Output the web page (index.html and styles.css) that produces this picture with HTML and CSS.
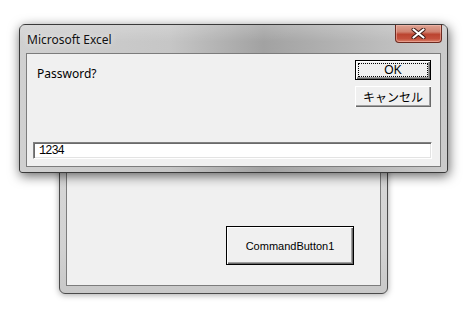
FILE: index.html
```html
<!DOCTYPE html>
<html lang="ja">
<head>
    <meta charset="UTF-8">
    <title>Microsoft Excel</title>
    <link rel="stylesheet" href="styles.css">
</head>
<body>
    <div class="desktop">
        <div class="window userform">
            <div class="client form-client">
                <button class="cmd default">CommandButton1</button>
            </div>
        </div>

        <div class="window dialog">
            <div class="titlebar">
                <span class="title">Microsoft Excel</span>
                <button class="close" aria-label="閉じる">
                    <svg width="15" height="11" viewBox="0 0 15 11">
                        <path d="M2.5 1.5 L12.5 9.5 M12.5 1.5 L2.5 9.5" stroke="#3b1712" stroke-width="4" stroke-linecap="round"/>
                        <path d="M2.5 1.5 L12.5 9.5 M12.5 1.5 L2.5 9.5" stroke="#ffffff" stroke-width="2.2" stroke-linecap="round"/>
                    </svg>
                </button>
            </div>
            <div class="client dialog-client">
                <div class="prompt-row">
                    <span class="prompt">Password?</span>
                    <div class="actions">
                        <button class="btn ok"><span class="focus">OK</span></button>
                        <button class="btn">キャンセル</button>
                    </div>
                </div>
                <input class="entry" type="text" value="1234">
            </div>
        </div>
    </div>
</body>
</html>
```

FILE: styles.css
```css
body {
    margin: 0;
    background: #ffffff;
    font-family: 'Noto Sans', 'Noto Sans CJK JP', sans-serif;
}
.desktop {
    position: relative;
    width: 475px;
    height: 313px;
    overflow: hidden;
}
.window {
    position: absolute;
    box-sizing: border-box;
    border: 1px solid #4a4a4a;
}
.client {
    box-sizing: border-box;
    background: #f0f0f0;
    border: 1px solid #7c7c7c;
}

/* back window (the user form) */
.userform {
    left: 59px;
    top: 140px;
    width: 329px;
    height: 154px;
    padding: 0 6px 7px 6px;
    border-radius: 0 0 6px 6px;
    background: linear-gradient(to bottom, #d8d8d8, #d2d2d2 70%, #c8c8c8);
    box-shadow: 0 1px 6px rgba(0, 0, 0, 0.35);
}
.form-client {
    height: 100%;
    display: flex;
    justify-content: flex-end;
    align-items: flex-end;
    padding: 0 26px 20px 0;
}
.cmd {
    width: 128px;
    height: 39px;
    padding: 0;
    font-family: 'Liberation Sans', 'Noto Sans CJK JP', sans-serif;
    font-size: 11px;
    color: #000;
    background: #f0f0f0;
    border: 1px solid #000;
    box-shadow: inset 1px 1px 0 #ffffff, inset -1px -1px 0 #696969, inset -2px -2px 0 #a0a0a0;
}

/* front window (the input box) */
.dialog {
    left: 19px;
    top: 24px;
    width: 429px;
    height: 149px;
    padding: 0 6px 6px 6px;
    border-color: #3a3a3a;
    border-radius: 6px 6px 3px 3px;
    background: linear-gradient(to right, #d0d0d0 0%, #c6c6c6 35%, #a2a2a2 57%, #b0b0b0 72%, #cbcbcb 100%);
    box-shadow: 1px 3px 12px rgba(0, 0, 0, 0.6);
}
.titlebar {
    height: 28px;
    display: flex;
    align-items: flex-start;
    justify-content: space-between;
    background: linear-gradient(to bottom, rgba(255, 255, 255, 0.2), rgba(255, 255, 255, 0) 60%);
    margin: 0 -6px;
    padding: 0 5px 0 7px;
}
.title {
    font-size: 12px;
    line-height: 16px;
    padding-top: 7px;
    color: #111;
    text-shadow: 0 0 6px rgba(255, 255, 255, 0.9);
}
.close {
    width: 47px;
    height: 18px;
    padding: 0;
    display: flex;
    align-items: center;
    justify-content: center;
    border: 1px solid #6d2a20;
    border-top: none;
    border-radius: 0 0 4px 4px;
    background: linear-gradient(to bottom, #dea493 0%, #d08270 40%, #bb4430 55%, #c4503c 80%, #d8826a 100%);
    box-shadow: inset 0 0 0 1px rgba(255, 200, 190, 0.45);
}
.dialog-client {
    height: 114px;
    display: flex;
    flex-direction: column;
    justify-content: space-between;
    padding: 6px 9px 7px 6px;
}
.prompt-row {
    display: flex;
    justify-content: space-between;
    align-items: flex-start;
}
.prompt {
    font-size: 12px;
    line-height: 16px;
    padding: 6px 0 0 4px;
    color: #000;
}
.actions {
    display: flex;
    flex-direction: column;
    gap: 6px;
}
.btn {
    box-sizing: border-box;
    width: 76px;
    height: 21px;
    padding: 0;
    font-family: 'Noto Sans CJK JP', 'Noto Sans', sans-serif;
    font-size: 12px;
    line-height: 14px;
    color: #000;
    background: #f0f0f0;
    border: none;
    box-shadow: inset 1px 1px 0 #ffffff, inset -1px -1px 0 #696969, inset -2px -2px 0 #a0a0a0;
}
.btn.ok {
    height: 20px;
    border: 1px solid #000;
    padding: 2px;
}
.focus {
    display: block;
    box-sizing: border-box;
    height: 100%;
    line-height: 12px;
    font-family: 'Liberation Sans', sans-serif;
    border: 1px dotted #000;
}
.entry {
    box-sizing: border-box;
    width: 399px;
    height: 17px;
    margin: 0;
    padding: 0 5px;
    font-family: 'Liberation Mono', monospace;
    font-size: 12px;
    letter-spacing: -1px;
    color: #000;
    background: #ffffff;
    border: 1px solid;
    border-color: #808080 #ffffff #ffffff #808080;
    box-shadow: inset 1px 1px 0 #6a6a6a, inset -1px -1px 0 #e3e3e3;
    outline: none;
}
```
